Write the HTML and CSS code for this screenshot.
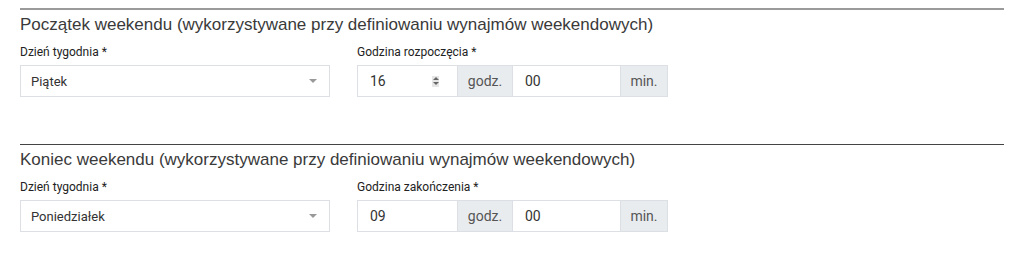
FILE: index.html
```html
<!DOCTYPE html>
<html lang="pl">
<head>
  <meta charset="UTF-8">
  <title>Weekend</title>
  <link rel="stylesheet" href="styles.css">
</head>
<body>
  <!-- Początek weekendu -->
  <section class="section section-first">
    <h2 class="section-title">Początek weekendu (wykorzystywane przy definiowaniu wynajmów weekendowych)</h2>
    <div class="row">
      <div class="field field-day">
        <label class="field-label">Dzień tygodnia *</label>
        <div class="select">
          <span>Piątek</span>
          <span class="caret"></span>
        </div>
      </div>
      <div class="field field-time">
        <label class="field-label">Godzina rozpoczęcia *</label>
        <div class="input-group">
          <div class="input input-hours">
            <span>16</span>
            <span class="spinner"><i class="up"></i><i class="down"></i></span>
          </div>
          <div class="addon addon-hours">godz.</div>
          <div class="input input-minutes"><span>00</span></div>
          <div class="addon addon-minutes">min.</div>
        </div>
      </div>
    </div>
  </section>

  <!-- Koniec weekendu -->
  <section class="section section-second">
    <h2 class="section-title">Koniec weekendu (wykorzystywane przy definiowaniu wynajmów weekendowych)</h2>
    <div class="row">
      <div class="field field-day">
        <label class="field-label">Dzień tygodnia *</label>
        <div class="select">
          <span>Poniedziałek</span>
          <span class="caret"></span>
        </div>
      </div>
      <div class="field field-time">
        <label class="field-label">Godzina zakończenia *</label>
        <div class="input-group">
          <div class="input input-hours"><span>09</span></div>
          <div class="addon addon-hours">godz.</div>
          <div class="input input-minutes"><span>00</span></div>
          <div class="addon addon-minutes">min.</div>
        </div>
      </div>
    </div>
  </section>
</body>
</html>
```

FILE: styles.css
```css
/* Ogólne */
body {
  margin: 0;
  padding: 8px 20px 0;
  background: #fff;
  font-family: Roboto, "Liberation Sans", sans-serif;
  color: #333;
}
/* Sekcje */
.section {
  border-top: 2px solid #9a9a9a;
}
.section-second {
  margin-top: 47px;
  border-top: 1px solid #444;
}
.section-title {
  margin: 0;
  padding-top: 3px;
  font-family: "Liberation Sans", Arial, sans-serif;
  font-weight: normal;
  font-size: 17px;
  line-height: 24px;
  color: #3a3a3a;
}
.row {
  display: flex;
  gap: 27px;
  margin-top: 8px;
}
.field {
  display: flex;
  flex-direction: column;
}
.field-day {
  width: 310px;
}
.field-time {
  width: 311px;
}
.field-label {
  font-size: 12px;
  font-weight: 400;
  line-height: 14px;
  color: #222;
  margin-bottom: 6px;
}
/* Select */
.select {
  height: 30px;
  border: 1px solid #dcdfe3;
  display: flex;
  align-items: center;
  justify-content: space-between;
  padding: 0 12px 0 10px;
  font-size: 13px;
  color: #333;
}
.caret {
  width: 0;
  height: 0;
  border-left: 4px solid transparent;
  border-right: 4px solid transparent;
  border-top: 4px solid #999;
}
/* Grupa godziny */
.input-group {
  display: flex;
  height: 32px;
}
.input {
  box-sizing: border-box;
  border: 1px solid #dcdfe3;
  display: flex;
  align-items: center;
  justify-content: space-between;
  padding: 0 12px;
  font-size: 14px;
  color: #333;
}
.input-hours {
  width: 100px;
  border-right: none;
}
.input-minutes {
  width: 107px;
  border-left: none;
  border-right: none;
}
.addon {
  box-sizing: border-box;
  background: #e9ecef;
  border: 1px solid #dcdfe3;
  display: flex;
  align-items: center;
  justify-content: center;
  font-size: 14px;
  color: #555;
}
.addon-hours {
  width: 56px;
}
.addon-minutes {
  width: 48px;
}
/* Strzałki pola liczbowego */
.spinner {
  display: flex;
  flex-direction: column;
  justify-content: center;
  align-items: center;
  gap: 2px;
  width: 7px;
  height: 11px;
  margin-right: 6px;
  background: #e6e6e6;
}
.spinner i {
  width: 0;
  height: 0;
  border-left: 3px solid transparent;
  border-right: 3px solid transparent;
}
.spinner .up {
  border-bottom: 3px solid #666;
}
.spinner .down {
  border-top: 3px solid #666;
}
```
